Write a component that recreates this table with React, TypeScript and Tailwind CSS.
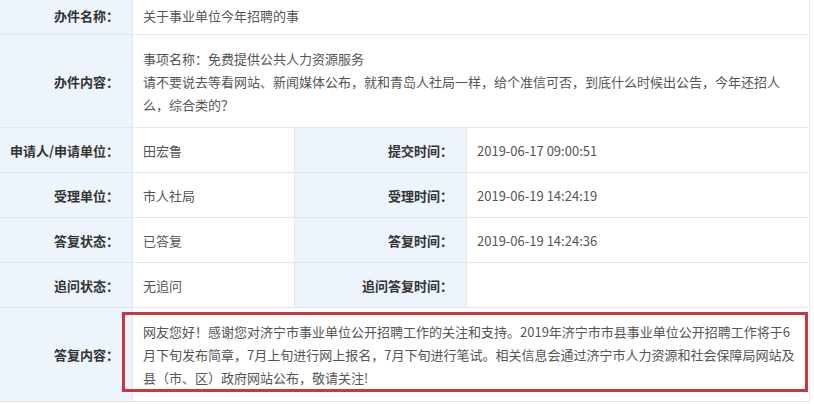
import React from "react";

const LABEL = "shrink-0 bg-[#edf4fc] flex items-center justify-end pr-[13px] font-bold text-[#333]";
const VALUE = "flex items-center pl-[10px] text-[#555]";

function Row4({ l1, v1, l2, v2 }: { l1: string; v1: string; l2: string; v2: string }) {
  return (
    <div className="flex h-[45px] border-b border-[#e3e6ea]">
      <div className={`${LABEL} w-[133px] border-r border-[#e3e6ea]`}>{l1}</div>
      <div className={`${VALUE} w-[162px] border-r border-[#e3e6ea]`}>{v1}</div>
      <div className={`${LABEL} w-[172px] border-r border-[#e3e6ea]`}>{l2}</div>
      <div className={`${VALUE} flex-1`}>{v2}</div>
    </div>
  );
}

export default function App() {
  return (
    <div className="w-[814px] h-[404px] overflow-hidden bg-white font-['Noto_Sans_CJK_SC','Noto_Sans',sans-serif] text-[13px] leading-[23px]">
      <div className="relative w-[810px] border-r border-[#e8eaee]">
        <div className="flex h-[35px] border-b border-[#e3e6ea]">
          <div className={`${LABEL} w-[133px] border-r border-[#e3e6ea] pb-[4px]`}>办件名称：</div>
          <div className={`${VALUE} flex-1 pb-[4px]`}>关于事业单位今年招聘的事</div>
        </div>
        <div className="flex h-[93px] border-b border-[#e3e6ea]">
          <div className={`${LABEL} w-[133px] border-r border-[#e3e6ea]`}>办件内容：</div>
          <div className="flex flex-1 flex-col justify-center pl-[10px] text-[#555]">
            <div>事项名称：免费提供公共人力资源服务</div>
            <div>请不要说去等看网站、新闻媒体公布，就和青岛人社局一样，给个准信可否，到底什么时候出公告，今年还招人</div>
            <div>么，综合类的？</div>
          </div>
        </div>
        <Row4 l1="申请人/申请单位：" v1="田宏鲁" l2="提交时间：" v2="2019-06-17 09:00:51" />
        <Row4 l1="受理单位：" v1="市人社局" l2="受理时间：" v2="2019-06-19 14:24:19" />
        <Row4 l1="答复状态：" v1="已答复" l2="答复时间：" v2="2019-06-19 14:24:36" />
        <Row4 l1="追问状态：" v1="无追问" l2="追问答复时间：" v2="" />
        <div className="flex h-[94px] border-b border-[#e3e6ea]">
          <div className={`${LABEL} w-[133px] border-r border-[#e3e6ea]`}>答复内容：</div>
          <div className="flex flex-1 flex-col justify-center pl-[10px] text-[#555]">
            <div>网友您好！感谢您对济宁市事业单位公开招聘工作的关注和支持。2019年济宁市市县事业单位公开招聘工作将于6</div>
            <div>月下旬发布简章，7月上旬进行网上报名，7月下旬进行笔试。相关信息会通过济宁市人力资源和社会保障局网站及</div>
            <div>县（市、区）政府网站公布，敬请关注!</div>
          </div>
        </div>
        <div className="pointer-events-none absolute left-[122px] top-[312px] h-[80px] w-[686px] border-[3px] border-[#c8383c]" />
      </div>
    </div>
  );
}
